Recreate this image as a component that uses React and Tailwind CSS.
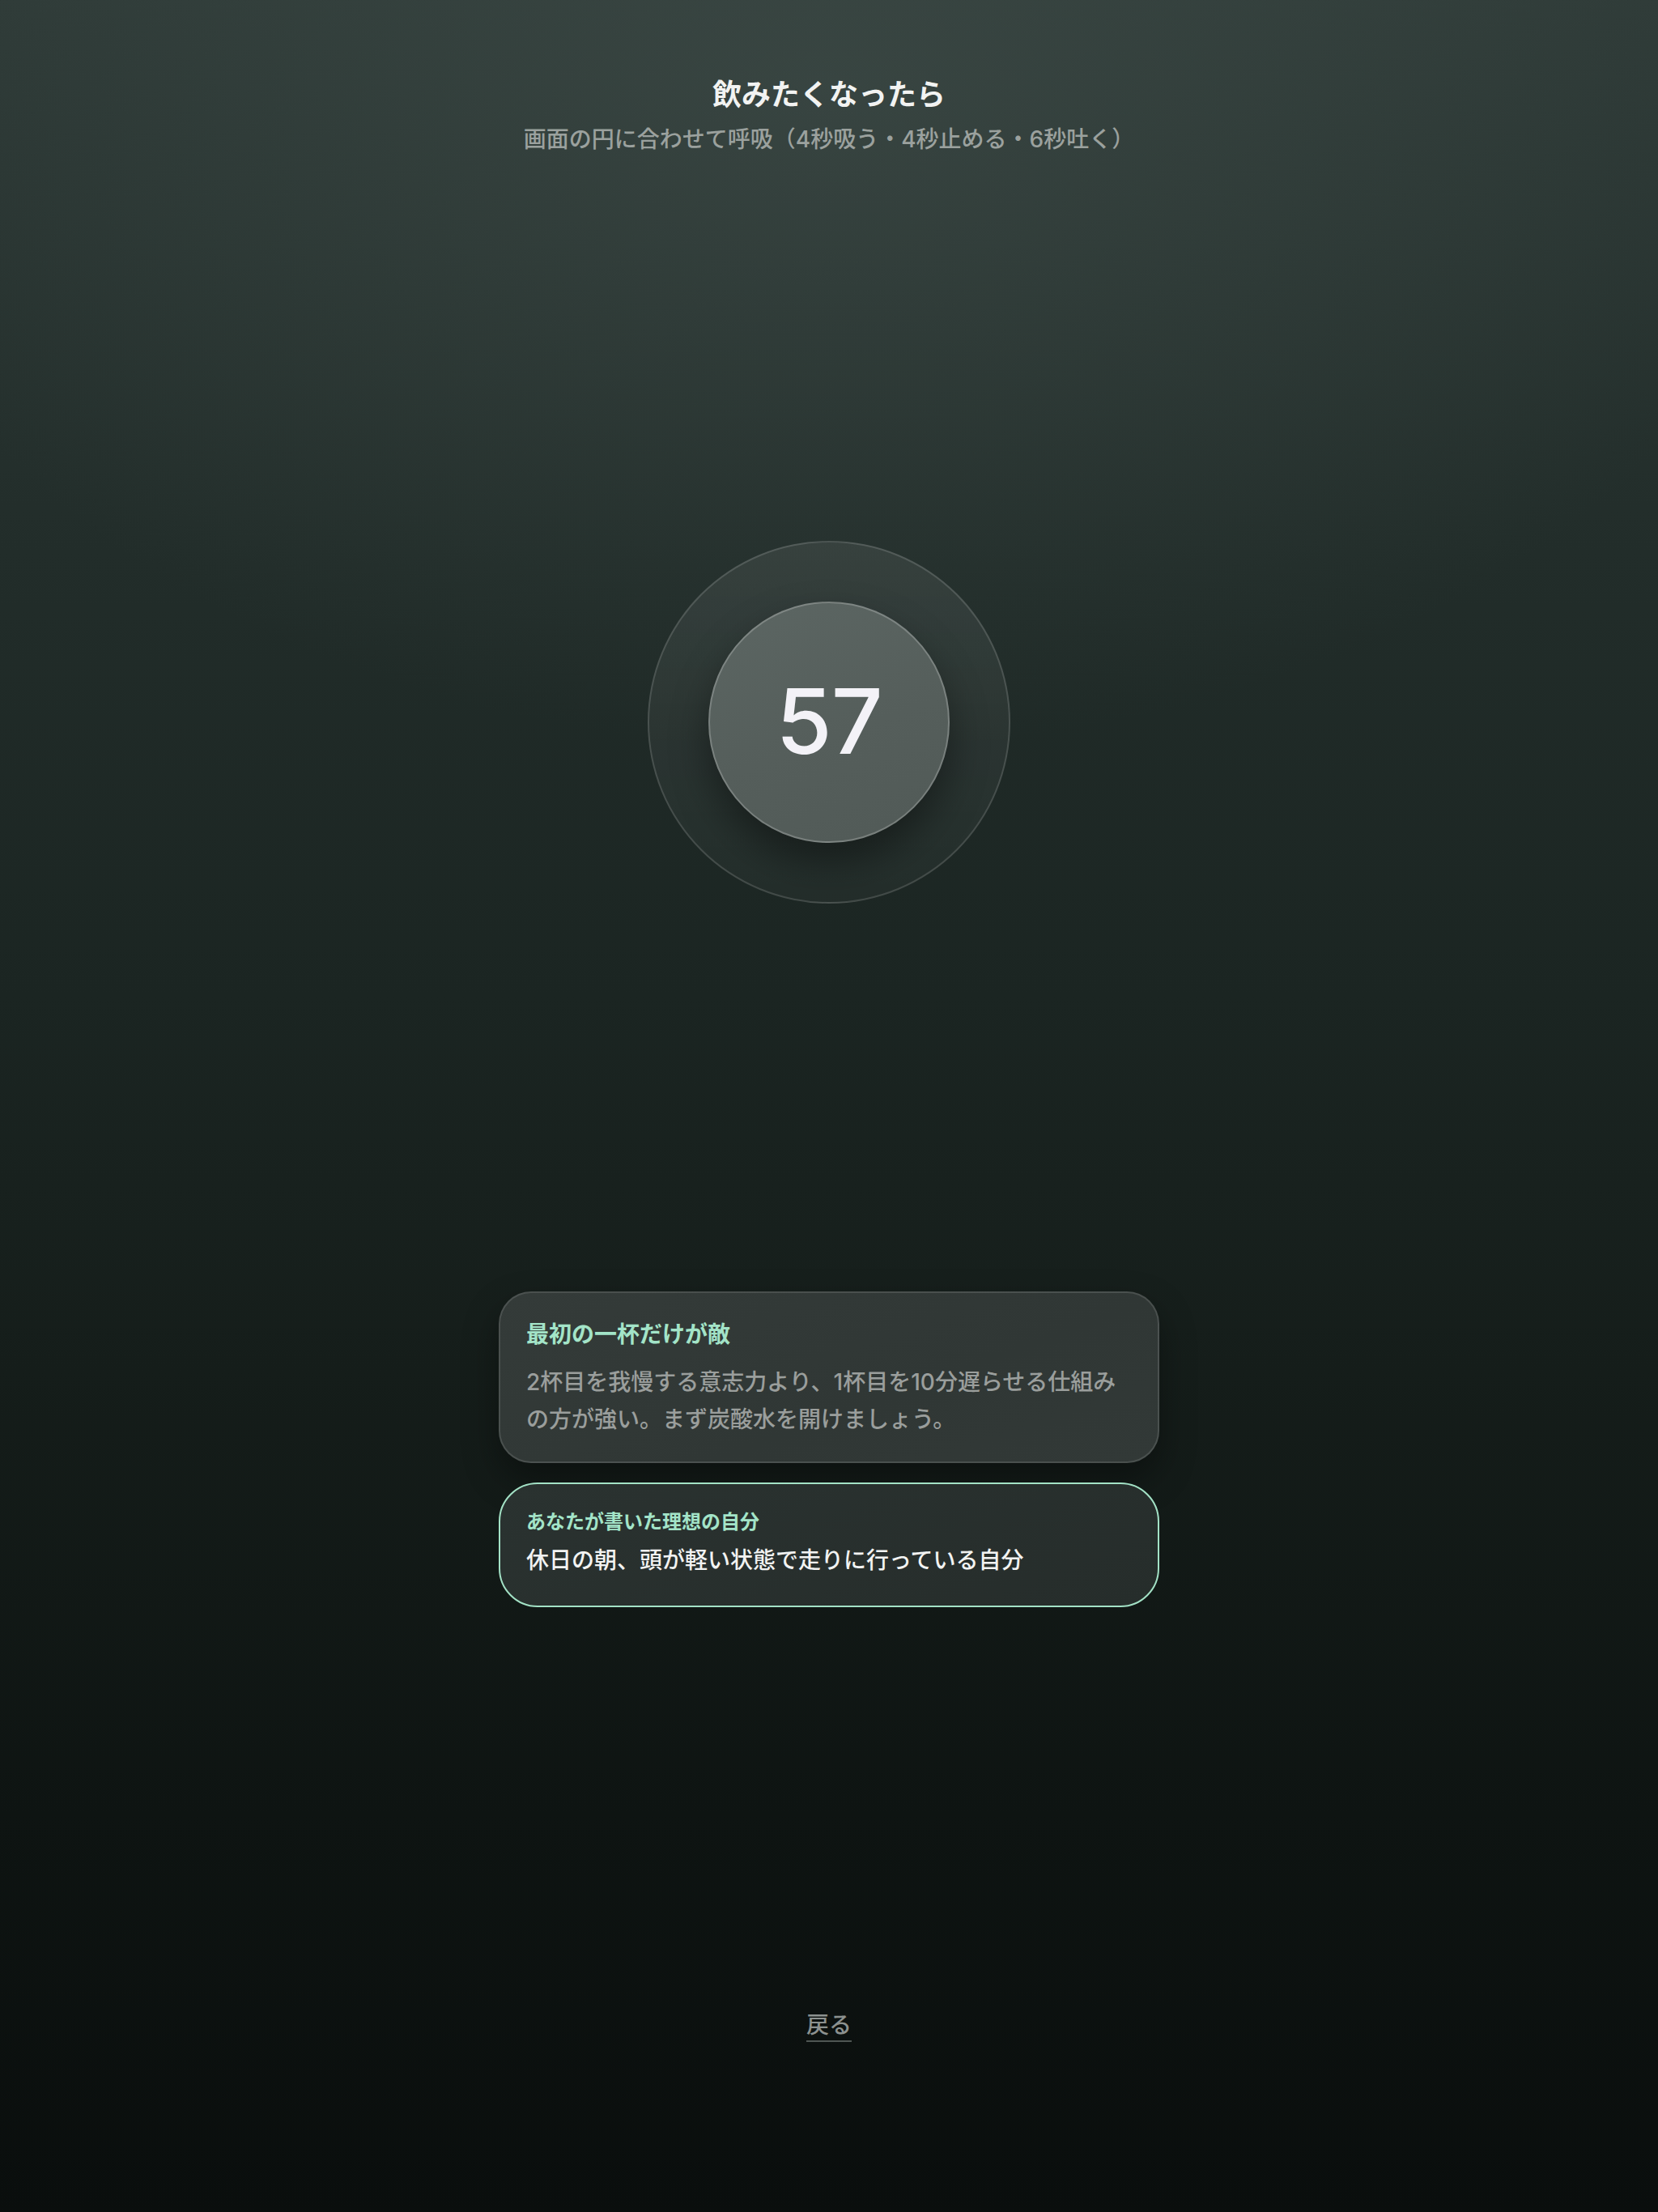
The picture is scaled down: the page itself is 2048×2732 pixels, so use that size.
export default function App() {
  const font = { fontFamily: '"Inter", "Noto Sans CJK JP", sans-serif' };
  return (
    <div
      className="min-h-[2732px] w-full flex flex-col items-center bg-[radial-gradient(ellipse_60%_30%_at_50%_4%,rgba(78,92,88,0.35),transparent_100%),linear-gradient(180deg,#2e3a37_0%,#222d2a_25%,#1b2522_45%,#151d1a_62%,#0e1412_82%,#0a0e0d_100%)]"
      style={font}
    >
      <div className="pt-[92px] flex flex-col items-center">
        <h1 className="text-[36px] leading-[50px] font-bold text-[#f2f3f2]">
          飲みたくなったら
        </h1>
        <p className="mt-[10px] text-[28px] leading-[40px] font-medium text-[#9ba19e]">
          画面の円に合わせて呼吸（4秒吸う・4秒止める・6秒吐く）
        </p>
      </div>

      <div className="mt-[476px] w-[448px] h-[448px] rounded-full border-2 border-[rgba(255,255,255,0.14)] bg-[linear-gradient(180deg,rgba(255,255,255,0.075),rgba(255,255,255,0.035))] flex items-center justify-center">
        <div className="w-[298px] h-[298px] rounded-full border-2 border-[rgba(255,255,255,0.22)] bg-[linear-gradient(160deg,#5c6663_0%,#555e5b_55%,#515a57_100%)] shadow-[0_24px_48px_rgba(0,0,0,0.38)] flex items-center justify-center">
          <span className="text-[112px] leading-none font-medium text-[#f3f2f7] tracking-[-1px] -mt-[4px]">
            57
          </span>
        </div>
      </div>

      <div className="mt-[479px] w-[816px] rounded-[40px] border-2 border-[rgba(255,255,255,0.12)] bg-[linear-gradient(160deg,#343b39_0%,#303735_60%,#323937_100%)] shadow-[0_20px_44px_rgba(0,0,0,0.35)] px-[32px] pt-[31px] pb-[29px]">
        <div className="text-[28px] leading-[40px] font-bold text-[#a3e4c8]">
          最初の一杯だけが敵
        </div>
        <p className="mt-[16px] text-[28px] leading-[46px] font-medium text-[#9a9e9c]">
          2杯目を我慢する意志力より、1杯目を10分遅らせる仕組みの方が強い。まず炭酸水を開けましょう。
        </p>
      </div>

      <div className="mt-[24px] w-[816px] rounded-[48px] border-2 border-[#a3e2c6] bg-[linear-gradient(160deg,#2a3230_0%,#262d2b_100%)] px-[32px] pt-[30px] pb-[36px]">
        <div className="text-[24px] leading-[34px] font-bold text-[#a3e4c8]">
          あなたが書いた理想の自分
        </div>
        <div className="mt-[10px] text-[28px] leading-[40px] font-medium text-[#f2f3f2]">
          休日の朝、頭が軽い状態で走りに行っている自分
        </div>
      </div>

      <button className="mt-[496px] text-[28px] leading-[40px] font-medium text-[#8c918f] underline decoration-[#4f5653] decoration-2 underline-offset-[9px]">
        戻る
      </button>
    </div>
  );
}
